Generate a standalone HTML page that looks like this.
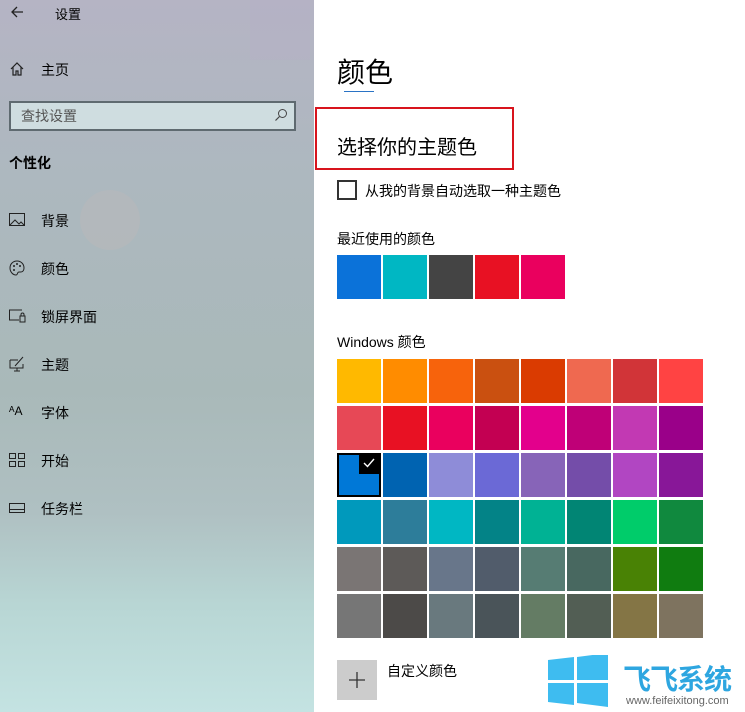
<!DOCTYPE html>
<html><head><meta charset="utf-8"><style>
*{margin:0;padding:0;box-sizing:border-box}
body{width:745px;height:712px;overflow:hidden;position:relative;background:#fff;font-family:"Liberation Sans","Noto Sans CJK SC",sans-serif;color:#000}
#side{position:absolute;left:0;top:0;width:314px;height:712px;background:linear-gradient(180deg,#b5b4c4 0%,#adb8bf 25%,#a9b9b9 55%,#afc0c2 72%,#b8d6d4 85%,#c4e3e2 100%)}
.t{position:absolute;white-space:nowrap}
.s{font-size:14px}
.sw{position:absolute;width:44px;height:44px}
svg{position:absolute}
</style></head><body>
<div id="side">
<div style="position:absolute;left:250px;top:0;width:60px;height:60px;background:#b6b0c8;opacity:.3"></div>
<div style="position:absolute;left:80px;top:190px;width:60px;height:60px;border-radius:50%;background:#c9b8b8;opacity:.25"></div>
</div>
<svg style="left:10px;top:5px" width="14" height="14" viewBox="0 0 14 14"><path d="M13 7H2M7 2L2 7l5 5" stroke="#222" stroke-width="1.3" fill="none"/></svg>
<div class="t" style="left:55px;top:4px;font-size:13px">设置</div>
<svg style="left:9px;top:61px" width="16" height="16" viewBox="0 0 16 16"><path d="M2 8L8 2l6 6M4 6v8h3v-4h2v4h3V6" stroke="#222" stroke-width="1.2" fill="none"/></svg>
<div class="t s" style="left:41px;top:60px">主页</div>
<div style="position:absolute;left:9px;top:101px;width:287px;height:30px;border:2px solid #5f6a70;background:#cfdde0"></div>
<div class="t s" style="left:21px;top:106px;color:#555">查找设置</div>
<svg style="left:274px;top:108px" width="14" height="14" viewBox="0 0 14 14"><circle cx="8.5" cy="5.5" r="4" stroke="#444" fill="none"/><path d="M5.5 8.5L1.5 12.5" stroke="#444" stroke-width="1.2"/></svg>
<div class="t s" style="left:9px;top:153px;font-weight:bold">个性化</div>
<svg style="left:9px;top:213px" width="16" height="14" viewBox="0 0 16 14"><rect x=".5" y=".5" width="15" height="12" stroke="#222" fill="none"/><path d="M1 12l5-5 4 4 2-2 3 3" stroke="#222" fill="none"/></svg>
<div class="t s" style="left:41px;top:211px">背景</div>
<svg style="left:9px;top:260px" width="16" height="16" viewBox="0 0 16 16"><path d="M8 1C4 1 1 4 1 8s3 7 6 7c2 0 1-3 3-3h2c2 0 3-2 3-4 0-4-3-7-7-7z" stroke="#222" fill="none"/><circle cx="5" cy="6" r="1" fill="#222"/><circle cx="8" cy="4" r="1" fill="#222"/><circle cx="11" cy="6" r="1" fill="#222"/><circle cx="5" cy="10" r="1" fill="#222"/></svg>
<div class="t s" style="left:41px;top:259px">颜色</div>
<svg style="left:9px;top:309px" width="17" height="14" viewBox="0 0 17 14"><path d="M13 1H.5v10H10" stroke="#222" fill="none"/><rect x="11" y="7" width="5" height="6" stroke="#222" fill="none"/><path d="M12 7V5.5a1.5 1.5 0 013 0V7" stroke="#222" fill="none"/></svg>
<div class="t s" style="left:41px;top:307px">锁屏界面</div>
<svg style="left:9px;top:356px" width="16" height="16" viewBox="0 0 16 16"><path d="M1 4h8M1 4v8h13V8M5 15h6M8 12v3M6 10l8-9" stroke="#222" fill="none"/></svg>
<div class="t s" style="left:41px;top:355px">主题</div>
<div class="t" style="left:9px;top:404px;font-size:12px">ᴬA</div>
<div class="t s" style="left:41px;top:403px">字体</div>
<svg style="left:9px;top:453px" width="16" height="14" viewBox="0 0 16 14"><rect x=".5" y=".5" width="6" height="5" stroke="#222" fill="none"/><rect x="9.5" y=".5" width="6" height="5" stroke="#222" fill="none"/><rect x=".5" y="8.5" width="6" height="5" stroke="#222" fill="none"/><rect x="9.5" y="8.5" width="6" height="5" stroke="#222" fill="none"/></svg>
<div class="t s" style="left:41px;top:451px">开始</div>
<svg style="left:9px;top:503px" width="16" height="10" viewBox="0 0 16 10"><rect x=".5" y=".5" width="15" height="9" stroke="#222" fill="none"/><path d="M1 6.5h14" stroke="#222"/></svg>
<div class="t s" style="left:41px;top:499px">任务栏</div>

<div class="t" style="left:337px;top:51px;font-size:28px;font-weight:normal">颜色</div>
<div style="position:absolute;left:344px;top:91px;width:30px;height:1px;background:#2a73c5"></div>
<div style="position:absolute;left:315px;top:107px;width:199px;height:63px;border:2px solid #d8141d"></div>
<div class="t" style="left:337px;top:131px;font-size:20px">选择你的主题色</div>
<div style="position:absolute;left:337px;top:180px;width:20px;height:20px;border:2px solid #333"></div>
<div class="t s" style="left:365px;top:181px">从我的背景自动选取一种主题色</div>
<div class="t s" style="left:337px;top:229px">最近使用的颜色</div>
<div class="sw" style="left:337px;top:255px;background:#0b72d9"></div>
<div class="sw" style="left:383px;top:255px;background:#00b7c3"></div>
<div class="sw" style="left:429px;top:255px;background:#444"></div>
<div class="sw" style="left:475px;top:255px;background:#e81123"></div>
<div class="sw" style="left:521px;top:255px;background:#ea005e"></div>
<div class="t s" style="left:337px;top:332px">Windows 颜色</div>
<div id="g"></div>
<script>
var c=[["#ffb900","#ff8c00","#f7630c","#ca5010","#da3b01","#ef6950","#d13438","#ff4343"],
["#e74856","#e81123","#ea005e","#c30052","#e3008c","#bf0077","#c239b3","#9a0089"],
["#0078d7","#0063b1","#8e8cd8","#6b69d6","#8764b8","#744da9","#b146c2","#881798"],
["#0099bc","#2d7d9a","#00b7c3","#038387","#00b294","#018574","#00cc6a","#10893e"],
["#7a7574","#5d5a58","#68768a","#515c6b","#567c73","#486860","#498205","#107c10"],
["#767676","#4c4a48","#69797e","#4a5459","#647c64","#525e54","#847545","#7e735f"]];
var h="";for(var r=0;r<6;r++)for(var k=0;k<8;k++){h+='<div class="sw" style="left:'+(337+k*46)+'px;top:'+(359+r*47)+'px;background:'+c[r][k]+'"></div>';}
document.getElementById('g').innerHTML=h;
</script>
<div style="position:absolute;left:337px;top:453px;width:44px;height:44px;border:2px solid #000;background:#0078d7"></div>
<div style="position:absolute;left:359px;top:453px;width:22px;height:21px;background:#000"></div>
<svg style="left:362px;top:456px" width="14" height="14" viewBox="0 0 14 14"><path d="M2 7l3.5 3.5L12 3" stroke="#fff" stroke-width="1.4" fill="none"/></svg>
<div style="position:absolute;left:337px;top:660px;width:40px;height:40px;background:#ccc"></div>
<svg style="left:347px;top:670px" width="20" height="20" viewBox="0 0 20 20"><path d="M10 2v16M2 10h16" stroke="#333" stroke-width="1.3"/></svg>
<div class="t s" style="left:387px;top:661px">自定义颜色</div>
<svg style="left:548px;top:655px" width="60" height="52" viewBox="0 0 60 52"><path d="M0 5l26-3v23H0zM29 2l31-4v27H29zM0 28h26v22L0 47zM29 28h31v24l-31-4z" fill="#3ebcf0"/></svg>
<div class="t" style="left:623px;top:658px;font-size:28px;font-weight:bold;color:#2ea6e0;letter-spacing:-1px">飞飞系统</div>
<div class="t" style="left:626px;top:695px;font-size:11px;color:#666">www.feifeixitong.com</div>
</body></html>
